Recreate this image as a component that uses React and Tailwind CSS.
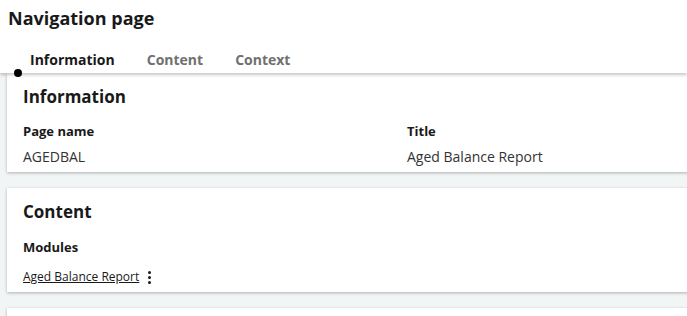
import React from 'react';

const Card = ({ children, className = '' }) => (
    <div className={`bg-white w-[900px] px-4 shadow-[0_1px_3px_rgba(0,0,0,0.28)] ${className}`}>
        {children}
    </div>
);

const App = () => {
    return (
        <div className="w-[687px] h-[316px] overflow-hidden bg-[#f2f5f6] text-[#191919]" style={{ fontFamily: '"Open Sans", sans-serif' }}>
            <div className="relative z-10 bg-white shadow-[0_2px_3px_rgba(0,0,0,0.22)]">
                <h1 className="px-2 pt-[5px] text-[18px] leading-[26px] font-bold">Navigation page</h1>
                <div className="flex pl-[14px] pt-[19px]">
                    <div className="px-4 pb-[3px] text-[14px] leading-[20px] font-bold text-[#191919]">Information</div>
                    <div className="px-4 pb-[3px] text-[14px] leading-[20px] font-bold text-[#707070]">Content</div>
                    <div className="px-4 pb-[3px] text-[14px] leading-[20px] font-bold text-[#707070]">Context</div>
                </div>
                <span className="absolute left-[14px] top-[69px] w-2 h-2 rounded-full bg-black" />
            </div>

            <div className="flex flex-col gap-4 pl-[7px]">
                <Card className="pt-[12px] pb-[5px]">
                    <h2 className="text-[17px] leading-[24px] font-bold">Information</h2>
                    <div className="grid grid-cols-[384px_384px] mt-3">
                        <div>
                            <div className="text-[13px] leading-[20px] font-bold">Page name</div>
                            <div className="mt-[6px] text-[14px] leading-[20px] text-[#333]">AGEDBAL</div>
                        </div>
                        <div>
                            <div className="text-[13px] leading-[20px] font-bold">Title</div>
                            <div className="mt-[6px] text-[14px] leading-[20px] text-[#333]">Aged Balance Report</div>
                        </div>
                    </div>
                </Card>

                <Card className="pt-[12px] pb-[5px]">
                    <h2 className="text-[17px] leading-[24px] font-bold">Content</h2>
                    <div className="mt-[13px] text-[13px] leading-[20px] font-bold">Modules</div>
                    <div className="mt-[10px] flex items-center gap-[7px] text-[12px] leading-[20px]">
                        <a href="#" className="underline text-[#191919]">Aged Balance Report</a>
                        <span className="flex flex-col gap-[2px] px-[2px]">
                            <span className="w-[3px] h-[3px] rounded-full bg-[#191919]" />
                            <span className="w-[3px] h-[3px] rounded-full bg-[#191919]" />
                            <span className="w-[3px] h-[3px] rounded-full bg-[#191919]" />
                        </span>
                    </div>
                </Card>

                <Card className="h-[40px]" />
            </div>
        </div>
    );
};

export default App;
